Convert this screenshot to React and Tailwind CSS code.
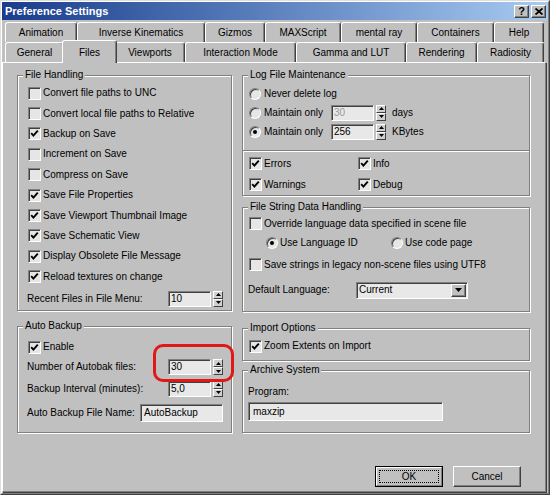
import React from "react";

const Check = ({ checked }) => (
  <span className="flex h-[13px] w-[13px] shrink-0 items-center justify-center border border-[#808080] border-b-white border-r-white bg-[#e6e6e6] shadow-[inset_1px_1px_0_#404040]">
    {checked && (
      <svg width="9" height="9" viewBox="0 0 9 9">
        <path d="M1.2 4.2 L3.4 6.6 L7.8 1.6" fill="none" stroke="#000" strokeWidth="1.9" />
      </svg>
    )}
  </span>
);

const Radio = ({ on }) => (
  <span className="flex h-[12px] w-[12px] shrink-0 items-center justify-center rounded-full border border-[#808080] border-b-white border-r-white bg-[#e6e6e6] shadow-[inset_1px_1px_0_#404040]">
    {on && <span className="h-[4px] w-[4px] rounded-full bg-black" />}
  </span>
);

const CheckRow = ({ checked, label, className }) => (
  <div className={"flex items-center gap-[2px] " + (className || "")}>
    <Check checked={checked} />
    <span className="leading-none whitespace-nowrap">{label}</span>
  </div>
);

const Field = ({ value, className, disabled }) => (
  <div
    className={
      "flex h-[16px] items-center border border-[#808080] border-b-white border-r-white bg-[#e8e8e8] pl-[2px] leading-none shadow-[inset_1px_1px_0_#404040] " +
      (disabled ? "text-[#9a9a9a] " : "") +
      (className || "")
    }
  >
    {value}
  </div>
);

const ArrowBtn = ({ up }) => (
  <div className="flex flex-1 items-center justify-center border border-white border-b-[#404040] border-r-[#404040] bg-[#d0d0d0]">
    <svg width="5" height="3" viewBox="0 0 5 3">
      {up ? <path d="M0 3 L2.5 0 L5 3Z" fill="#000" /> : <path d="M0 0 L2.5 3 L5 0Z" fill="#000" />}
    </svg>
  </div>
);

const Spinner = ({ value, disabled }) => (
  <div className="flex items-center gap-[2px]">
    <Field value={value} disabled={disabled} className="w-[43px]" />
    <div className="flex h-[16px] w-[10px] flex-col">
      <ArrowBtn up />
      <ArrowBtn />
    </div>
  </div>
);

const Group = ({ title, className, children }) => (
  <div className={"relative border border-[#808080] shadow-[1px_1px_0_#fff,inset_1px_1px_0_#fff] " + (className || "")}>
    {title && (
      <span className="absolute -top-[7px] left-[5px] bg-[#c0c0c0] px-[2px] leading-[12px] whitespace-nowrap">{title}</span>
    )}
    {children}
  </div>
);

const Tab = ({ label, className }) => (
  <div
    className={
      "flex items-center justify-center rounded-t-[3px] border-l border-r border-t border-l-white border-r-[#404040] border-t-white bg-[#c0c0c0] shadow-[inset_-1px_0_0_#808080] whitespace-nowrap " +
      (className || "")
    }
  >
    {label}
  </div>
);

const Button = ({ label, isDefault }) =>
  isDefault ? (
    <div className="h-[21px] w-[68px] border border-black">
      <div className="flex h-full w-full items-center justify-center border border-white border-b-[#808080] border-r-[#808080] p-[2px]">
        <div className="flex h-full w-full items-center justify-center border border-dotted border-black">{label}</div>
      </div>
    </div>
  ) : (
    <div className="flex h-[21px] w-[68px] items-center justify-center border border-white border-b-[#404040] border-r-[#404040] shadow-[inset_-1px_-1px_0_#808080]">
      {label}
    </div>
  );

export default function App() {
  const fileHandling = [
    ["Convert file paths to UNC", false],
    ["Convert local file paths to Relative", false],
    ["Backup on Save", true],
    ["Increment on Save", false],
    ["Compress on Save", false],
    ["Save File Properties", true],
    ["Save Viewport Thumbnail Image", true],
    ["Save Schematic View", true],
    ["Display Obsolete File Message", true],
    ["Reload textures on change", true],
  ];

  return (
    <div className="relative h-[495px] w-[550px] overflow-hidden border border-[#dfdfdf] border-b-[#404040] border-r-[#404040] bg-[#c0c0c0] font-['Liberation_Sans',Arial,sans-serif] text-[10px] text-black">
      <div className="h-full w-full border border-white border-b-[#808080] border-r-[#808080]">
        {/* Title bar */}
        <div className="flex h-[18px] items-center justify-between bg-linear-to-r from-[#1a3c8c] to-[#a9cbf1] pl-[3px] pr-[2px]">
          <span className="text-[11px] font-bold leading-none text-white">Preference Settings</span>
          <div className="flex gap-[2px]">
            <div className="flex h-[13px] w-[15px] items-center justify-center border border-white border-b-[#404040] border-r-[#404040] bg-[#c0c0c0] shadow-[inset_-1px_-1px_0_#808080]">
              <span className="text-[11px] font-bold leading-none">?</span>
            </div>
            <div className="flex h-[13px] w-[15px] items-center justify-center border border-white border-b-[#404040] border-r-[#404040] bg-[#c0c0c0] shadow-[inset_-1px_-1px_0_#808080]">
              <svg width="8" height="7" viewBox="0 0 8 7">
                <path d="M0.5 0.5 L7.5 6.5 M7.5 0.5 L0.5 6.5" stroke="#000" strokeWidth="1.8" />
              </svg>
            </div>
          </div>
        </div>

        {/* Tabs */}
        <div className="mt-[2px] pl-[3px]">
          <div className="flex h-[20px]">
            <Tab label="Animation" className="w-[72px]" />
            <Tab label="Inverse Kinematics" className="w-[128px]" />
            <Tab label="Gizmos" className="w-[60px]" />
            <Tab label="MAXScript" className="w-[76px]" />
            <Tab label="mental ray" className="w-[76px]" />
            <Tab label="Containers" className="w-[77px]" />
            <Tab label="Help" className="w-[50px]" />
          </div>
          <div className="flex h-[20px] items-end">
            <Tab label="General" className="h-[20px] w-[59px]" />
            <Tab label="Files" className="relative z-10 -mx-[2px] -mb-px h-[23px] w-[55px]" />
            <Tab label="Viewports" className="h-[20px] w-[70px]" />
            <Tab label="Interaction Mode" className="h-[20px] w-[111px]" />
            <Tab label="Gamma and LUT" className="h-[20px] w-[110px]" />
            <Tab label="Rendering" className="h-[20px] w-[71px]" />
            <Tab label="Radiosity" className="h-[20px] w-[67px]" />
          </div>
        </div>

        {/* Panel */}
        <div className="h-[430px] w-[544px] border border-white border-b-[#808080] border-r-[#808080] pl-[14px] pt-[12px] shadow-[1px_1px_0_#404040]">
          <div className="flex gap-[10px]">
            {/* Left column */}
            <div className="w-[215px]">
              <Group title="File Handling" className="h-[236px] pl-[10px] pr-[8px] pt-[7px]">
                {fileHandling.map(([label, checked]) => (
                  <CheckRow key={label} label={label} checked={checked} className="h-[20.4px]" />
                ))}
                <div className="mt-[2px] flex h-[20px] items-center justify-between">
                  <span className="-ml-px leading-none">Recent Files in File Menu:</span>
                  <Spinner value="10" />
                </div>
              </Group>

              <Group title="Auto Backup" className="mt-[15px] h-[107px] pl-[10px] pr-[8px] pt-[10px]">
                <CheckRow label="Enable" checked className="h-[20px]" />
                <div className="flex h-[20px] items-center justify-between">
                  <span className="-ml-px leading-none">Number of Autobak files:</span>
                  <Spinner value="30" />
                </div>
                <div className="flex h-[23px] items-center justify-between">
                  <span className="-ml-px leading-none">Backup Interval (minutes):</span>
                  <Spinner value="5,0" />
                </div>
                <div className="flex h-[25px] items-center justify-between">
                  <span className="-ml-px leading-none">Auto Backup File Name:</span>
                  <Field value="AutoBackup" className="h-[18px] w-[83px] pl-[3px]" />
                </div>
              </Group>
            </div>

            {/* Right column */}
            <div className="w-[288px]">
              <Group title="Log File Maintenance" className="h-[76px] pl-[6px] pt-[8px]">
                <div className="flex h-[19px] items-center">
                  <Radio />
                  <span className="ml-[3px] leading-none">Never delete log</span>
                </div>
                <div className="flex h-[19px] items-center">
                  <Radio />
                  <span className="ml-[3px] w-[64px] leading-none whitespace-nowrap">Maintain only</span>
                  <div className="ml-[3px]">
                    <Spinner value="30" disabled />
                  </div>
                  <span className="ml-[6px] leading-none">days</span>
                </div>
                <div className="flex h-[19px] items-center">
                  <Radio on />
                  <span className="ml-[3px] w-[64px] leading-none whitespace-nowrap">Maintain only</span>
                  <div className="ml-[3px]">
                    <Spinner value="256" />
                  </div>
                  <span className="ml-[6px] leading-none">KBytes</span>
                </div>
              </Group>
              <Group className="-mt-px grid h-[46px] grid-cols-[109px_1fr] pl-[6px] pt-[2px]">
                <CheckRow label="Errors" checked className="h-[21px]" />
                <CheckRow label="Info" checked className="h-[21px]" />
                <CheckRow label="Warnings" checked className="h-[21px]" />
                <CheckRow label="Debug" checked className="h-[21px]" />
              </Group>

              <Group title="File String Data Handling" className="mt-[11px] h-[105px] pl-[6px] pt-[6px]">
                <CheckRow label="Override language data specified in scene file" className="h-[19px]" />
                <div className="flex h-[20px] items-center pl-[17px]">
                  <div className="flex w-[125px] items-center gap-[2px]">
                    <Radio on />
                    <span className="leading-none">Use Language ID</span>
                  </div>
                  <div className="flex items-center gap-[2px]">
                    <Radio />
                    <span className="leading-none">Use code page</span>
                  </div>
                </div>
                <CheckRow label="Save strings in legacy non-scene files using UTF8" className="h-[23px]" />
                <div className="flex h-[28px] items-center">
                  <span className="-ml-px w-[108px] leading-none">Default Language:</span>
                  <div className="flex h-[17px] w-[112px] items-center justify-between border border-[#808080] border-b-white border-r-white bg-[#e8e8e8] pl-[2px] pr-px shadow-[inset_1px_1px_0_#404040]">
                    <span className="leading-none">Current</span>
                    <div className="flex h-[13px] w-[15px] items-center justify-center border border-white border-b-[#404040] border-r-[#404040] bg-[#c0c0c0] shadow-[inset_-1px_-1px_0_#808080]">
                      <svg width="7" height="4" viewBox="0 0 7 4">
                        <path d="M0 0 L3.5 4 L7 0Z" fill="#000" />
                      </svg>
                    </div>
                  </div>
                </div>
              </Group>

              <Group title="Import Options" className="mt-[16px] h-[33px] pl-[6px] pt-[7px]">
                <CheckRow label="Zoom Extents on Import" checked className="h-[20px]" />
              </Group>

              <Group title="Archive System" className="mt-[9px] h-[63px] pl-[5px] pt-[14px]">
                <div className="flex h-[14px] items-center leading-none">Program:</div>
                <Field value="maxzip" className="mt-[3px] h-[19px] w-[195px] pl-[4px]" />
              </Group>
            </div>
          </div>

          <div className="mt-[33px] flex justify-end gap-[10px] pr-[24px]">
            <Button label="OK" isDefault />
            <Button label="Cancel" />
          </div>
        </div>
      </div>

      {/* red highlight annotation */}
      <div className="pointer-events-none absolute left-[152px] top-[343px] z-20 h-[38px] w-[81px] rounded-[10px] border-[3px] border-[#e01818]" />
    </div>
  );
}
